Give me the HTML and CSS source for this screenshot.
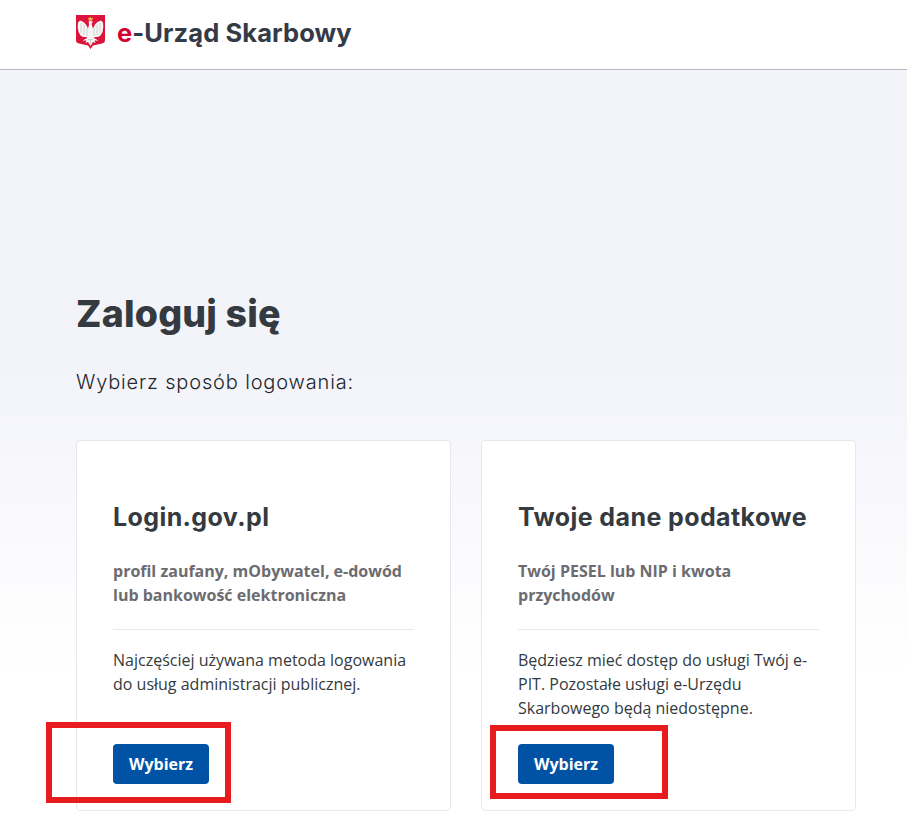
FILE: index.html
```html
<!DOCTYPE html>
<html lang="pl">
<head>
<meta charset="utf-8">
<title>e-Urząd Skarbowy</title>
<link rel="stylesheet" href="styles.css">
</head>
<body>
<header class="topbar">
  <svg class="emblem" viewBox="0 0 29 34" aria-hidden="true">
    <path class="shield" d="M0 0H29V25Q29 28 26 28.500L17 30.500L14.500 34L12 30.500L3 28.500Q0 28 0 25Z"/>
    <path class="crown" d="M12.800 5.500L12 2.500L13.500 3.500L14.500 1.500L15.500 3.500L17 2.500L16.200 5.500Z"/>
    <path class="eagle" d="M12.800 6L16 6.200L17 7.300L15.800 7.800L15.800 10L17 13.500L19 9.500L21.500 7L25 5.500L27 7.500L27.300 12L26.500 17L24.500 20.500L22 22L19 22L17.500 23L20 24L22.500 26L20 25.500L18.500 25.500L19.500 28L17 27L14.500 31L12 27L9.500 28L10.500 25.500L9 25.500L6.500 26L9 24L11.500 23L10 22L7 22L4.500 20.500L2.500 17L1.700 12L2 7.500L4 5.500L7.500 7L10 9.500L12 13.500L13 10Z"/>
    <path class="feather" d="M5 8V18M8 9.500V20M11 12.500V21M24 8V18M21 9.500V20M18 12.500V21M12 24.500H17M14.500 25V29"/>
  </svg>
  <div class="brand"><span class="brand-e">e</span>-Urząd Skarbowy</div>
</header>
<main class="page">
  <h1 class="title">Zaloguj się</h1>
  <p class="lead">Wybierz sposób logowania:</p>
  <div class="cards">
    <section class="card">
      <h2 class="card-title">Login.gov.pl</h2>
      <p class="card-sub">profil zaufany, mObywatel, e-dowód lub bankowość elektroniczna</p>
      <hr class="rule">
      <p class="card-text">Najczęściej używana metoda logowania do usług administracji publicznej.</p>
      <button class="btn" type="button">Wybierz</button>
    </section>
    <section class="card">
      <h2 class="card-title">Twoje dane podatkowe</h2>
      <p class="card-sub">Twój PESEL lub NIP i kwota przychodów</p>
      <hr class="rule">
      <p class="card-text">Będziesz mieć dostęp do usługi Twój e-PIT. Pozostałe usługi e-Urzędu Skarbowego będą niedostępne.</p>
      <button class="btn" type="button">Wybierz</button>
    </section>
  </div>
</main>
<div class="mark mark-left"></div>
<div class="mark mark-right"></div>
</body>
</html>
```

FILE: styles.css
```css
* { box-sizing: border-box; }
html, body { margin: 0; height: 100%; }
body {
  position: relative;
  overflow: hidden;
  font-family: "Open Sans", "Noto Sans", sans-serif;
  color: #343a40;
  background: #fff;
}
.topbar {
  height: 70px;
  padding: 0 0 5px 76px;
  display: flex;
  align-items: center;
  gap: 12px;
  background: #fff;
  border-bottom: 1px solid #b9bbbe;
}
.emblem { width: 29px; height: 34px; flex: none; }
.shield { fill: #dc143c; }
.eagle { fill: #f6f6f6; }
.crown { fill: #f2c14e; }
.feather { fill: none; stroke: #c9c9cc; stroke-width: 0.8; }
.brand {
  font-family: Inter, sans-serif;
  font-weight: 700;
  font-size: 25.500px;
  color: #343a46;
  letter-spacing: 0.1px;
}
.brand-e { color: #d5002f; }
.page {
  height: 752px;
  padding: 221px 51px 0 76px;
  background: linear-gradient(#f3f4fa 40%, #fff 80%);
}
.title {
  margin: 0;
  font-family: Inter, sans-serif;
  font-weight: 800;
  font-size: 37.500px;
  line-height: 46px;
  letter-spacing: 0.2px;
  color: #343a40;
}
.lead {
  margin: 32px 0 0;
  font-family: Inter, sans-serif;
  font-weight: 300;
  font-size: 20px;
  line-height: 26px;
  letter-spacing: 0.84px;
  color: #22272c;
}
.cards { display: flex; gap: 30px; margin-top: 45px; }
.card {
  flex: 1 1 0;
  height: 371px;
  padding: 60px 36px 0;
  background: #fff;
  border: 1px solid #e7e8ec;
  border-radius: 4px;
}
.card-title {
  margin: 0;
  font-family: Inter, sans-serif;
  font-weight: 700;
  font-size: 25px;
  line-height: 32px;
  letter-spacing: 0.4px;
  color: #343a40;
}
.card-sub {
  margin: 26px 0 0;
  font-weight: 700;
  font-size: 16px;
  line-height: 24px;
  color: #6c6c70;
  min-height: 48px;
}
.rule { margin: 22px 0 0; border: 0; border-top: 1px solid #e7e8ec; }
.card-text {
  margin: 18px 0 0;
  font-size: 16px;
  line-height: 24px;
  color: #343a40;
  min-height: 72px;
}
.btn {
  display: block;
  margin-top: 24px;
  width: 96px;
  height: 40px;
  padding: 0;
  font-family: "Open Sans", sans-serif;
  font-weight: 700;
  font-size: 16px;
  color: #fff;
  background: #0052a5;
  border: 0;
  border-radius: 4px;
}
.mark {
  position: absolute;
  border: 6px solid #e81c1f;
}
.mark-left { left: 46px; top: 722px; width: 185px; height: 81px; }
.mark-right { left: 490px; top: 725px; width: 178px; height: 74px; }
```
